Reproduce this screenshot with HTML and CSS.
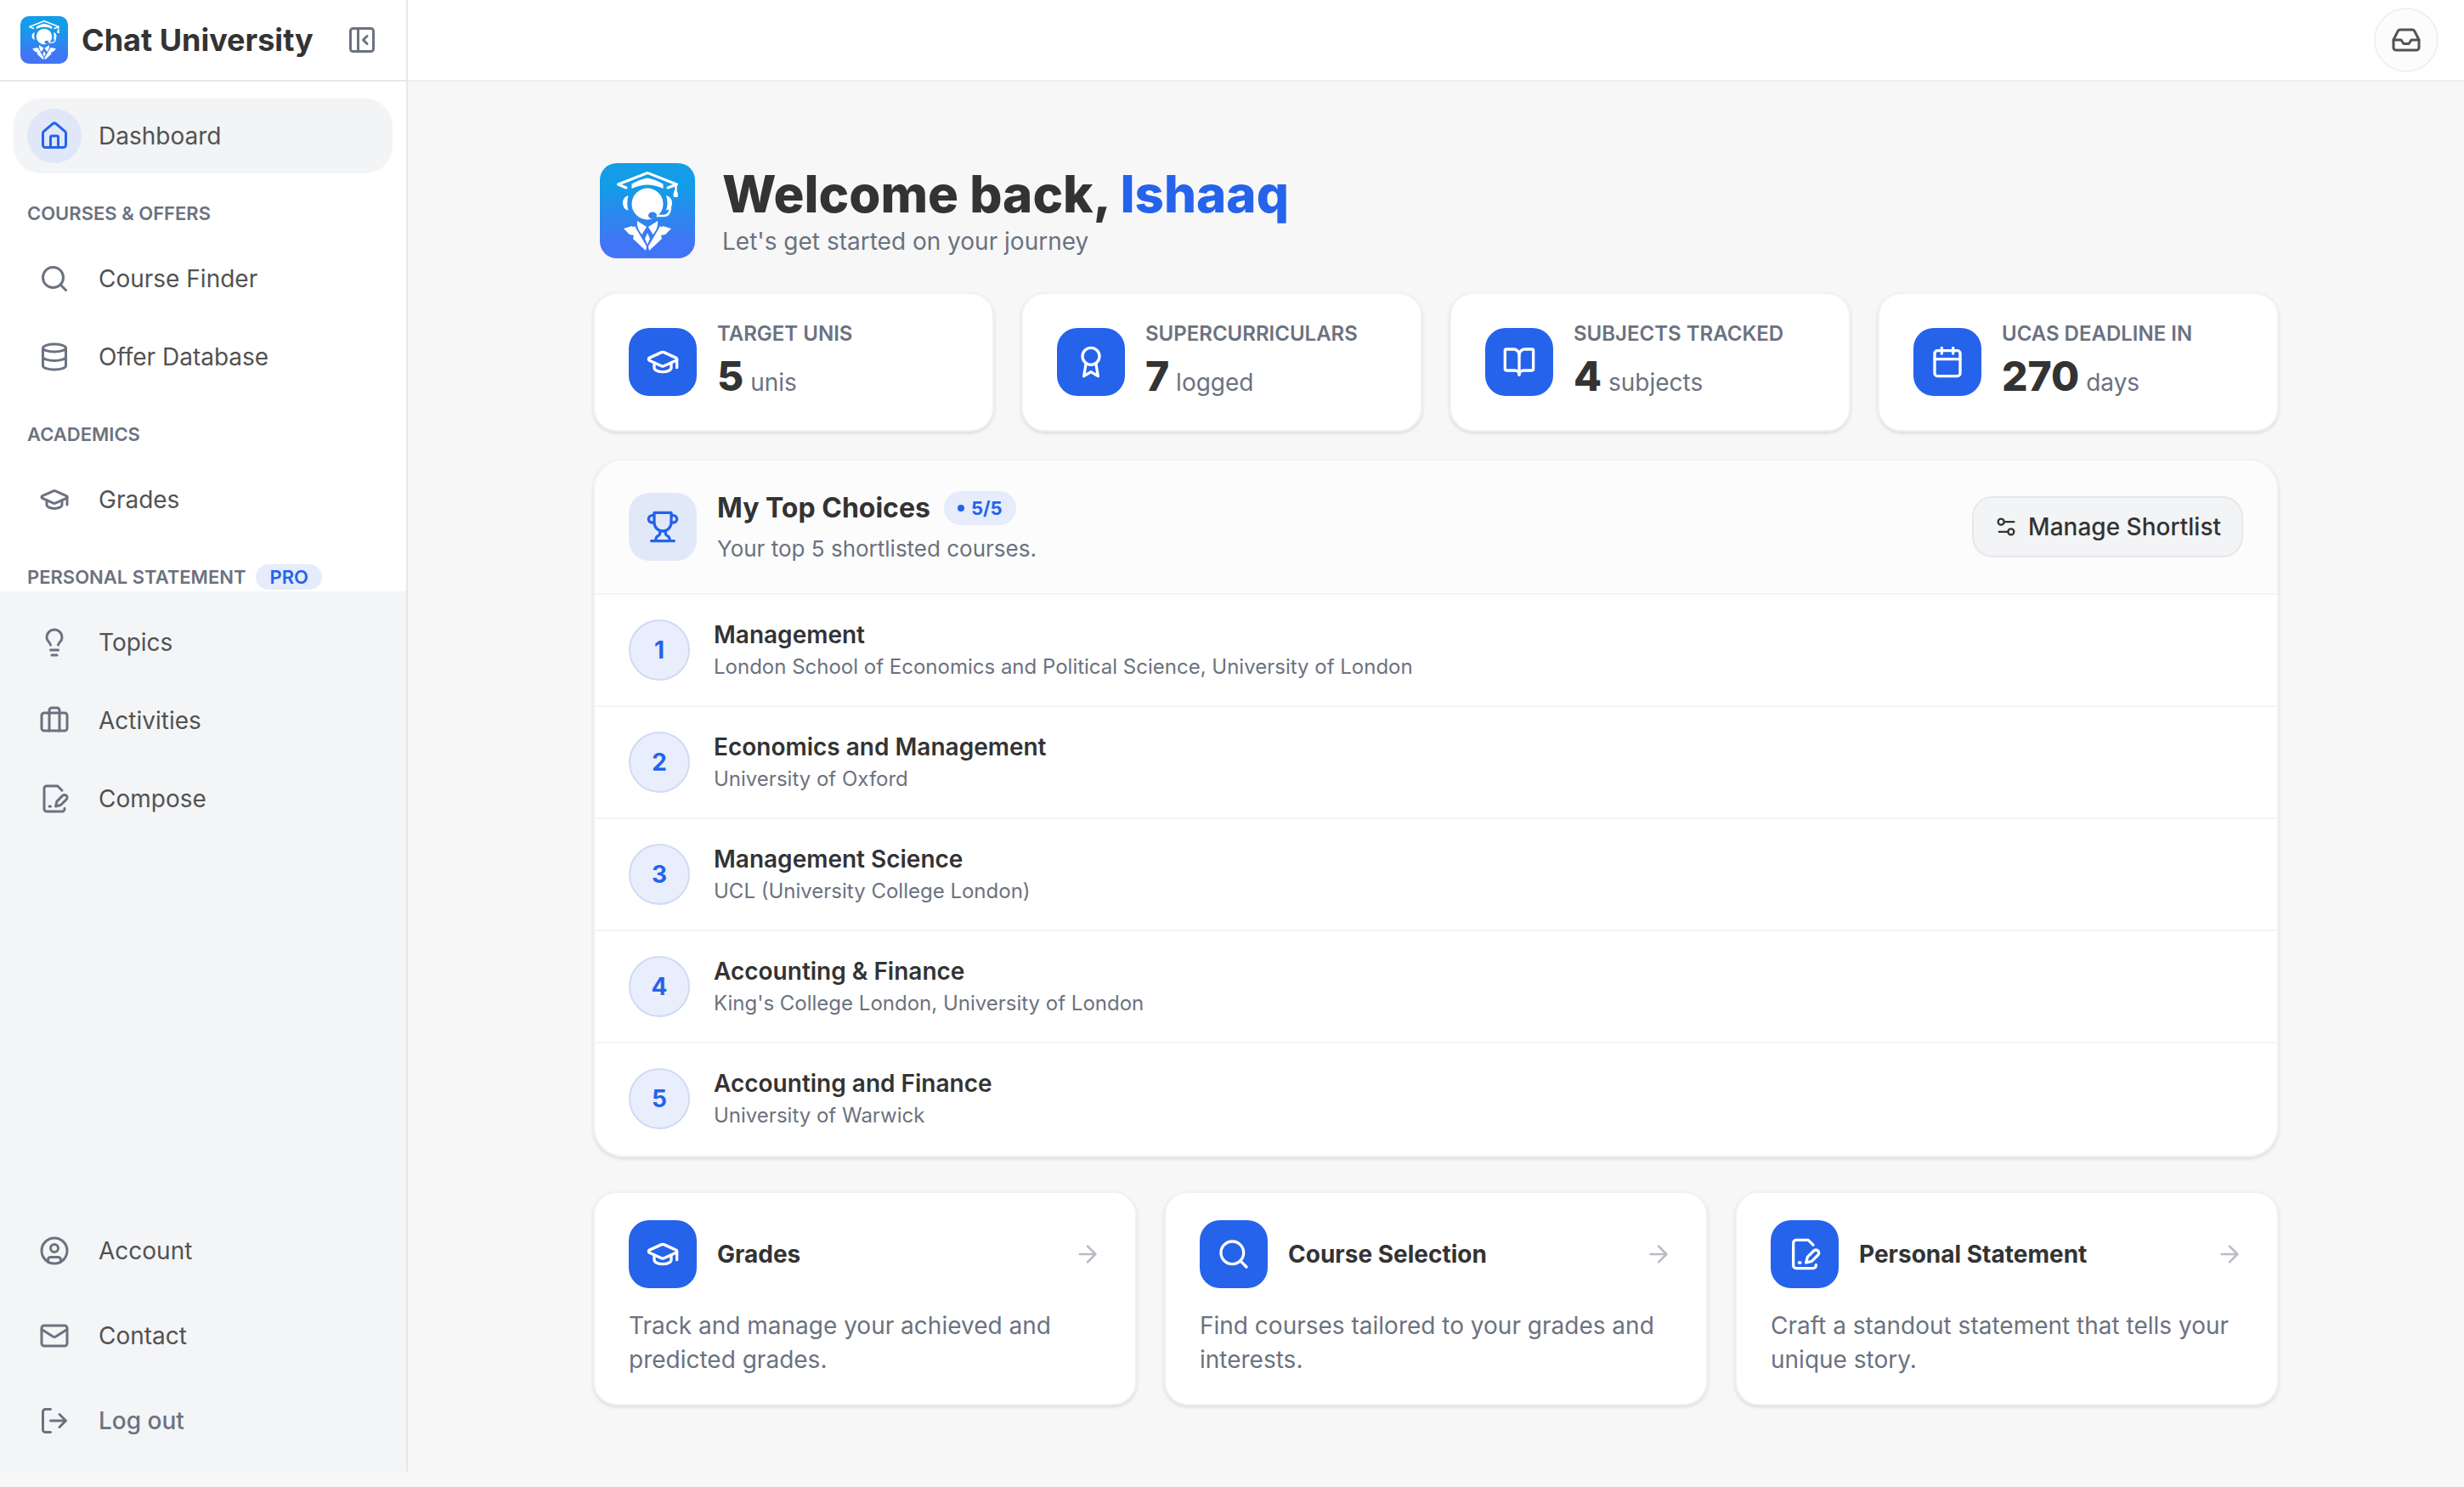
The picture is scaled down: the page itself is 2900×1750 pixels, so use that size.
FILE: index.html
```html
<!DOCTYPE html>
<html lang="en">
<head>
  <meta charset="UTF-8">
  <title>Dashboard - Chat University</title>
  <link rel="stylesheet" href="styles.css">
</head>
<body>
  <!-- Shared icons -->
  <svg class="sprite" aria-hidden="true">
    <defs>
      <linearGradient id="logo-bg" x1="0" y1="0" x2="0" y2="1">
        <stop offset="0.25" stop-color="#149ce8"/>
        <stop offset="0.85" stop-color="#4274f6"/>
      </linearGradient>
    </defs>
    <symbol id="logo" viewBox="0 0 112 112">
      <rect width="112" height="112" rx="20" fill="url(#logo-bg)"/>
      <path d="M31 29 21.500 25 56 11.500 90.500 25 80 29" fill="none" stroke="#fff" stroke-width="3" stroke-linejoin="round" stroke-linecap="round"/>
      <path d="M37.500 30V24.500Q47 19 56 17.500Q65 19 74.500 24.500V30Q56 21 37.500 30Z" fill="#fff"/>
      <path d="M89.500 25V33" stroke="#fff" stroke-width="2.500"/>
      <path d="M88.500 31Q93 34 91.500 40H87Q85.500 36 88.500 31Z" fill="#fff"/>
      <circle cx="56" cy="48" r="18.500" fill="#fff"/>
      <path d="M33.500 38Q27 40 27 47Q27 54 33.500 55.500Q31 47 33.500 38ZM78 38Q85 40 85 47Q85 54 78 55.500Q81 47 78 38Z" fill="#fff"/>
      <path d="M83 50Q83 62 75 62H66" fill="none" stroke="#fff" stroke-width="2.500" stroke-linecap="round"/>
      <ellipse cx="62" cy="61.500" rx="5" ry="4" fill="#2e84f0"/>
      <path d="M28 77 38 74 54 103 39 89 40 85 35 84ZM84 77 74 74 58 103 73 89 72 85 77 84Z" fill="#fff"/>
      <path d="M44 68 55 75 49.500 84Q43 77 44 68ZM68 68 57 75 62.500 84Q69 77 68 68Z" fill="#fff"/>
      <path d="M41 74 55 98 54 103 38 76ZM71 74 57 98 58 103 74 76Z" fill="#fff"/>
      <path d="M56 82 59 89 56 96 53 89Z" fill="#fff"/>
    </symbol>
    <symbol id="panel" viewBox="0 0 24 24"><rect width="18" height="18" x="3" y="3" rx="2"/><path d="M9 3v18M16 15l-3-3 3-3"/></symbol>
    <symbol id="home" viewBox="0 0 24 24"><path d="M15 21v-8a1 1 0 0 0-1-1h-4a1 1 0 0 0-1 1v8"/><path d="M3 10a2 2 0 0 1 .709-1.528l7-5.999a2 2 0 0 1 2.582 0l7 5.999A2 2 0 0 1 21 10v9a2 2 0 0 1-2 2H5a2 2 0 0 1-2-2z"/></symbol>
    <symbol id="search" viewBox="0 0 24 24"><circle cx="11" cy="11" r="8"/><path d="m21 21-4.300-4.300"/></symbol>
    <symbol id="database" viewBox="0 0 24 24"><ellipse cx="12" cy="5" rx="9" ry="3"/><path d="M3 5V19A9 3 0 0 0 21 19V5"/><path d="M3 12A9 3 0 0 0 21 12"/></symbol>
    <symbol id="cap" viewBox="0 0 24 24"><path d="M21.420 10.922a1 1 0 0 0-.019-1.838L12.830 5.180a2 2 0 0 0-1.660 0L2.600 9.080a1 1 0 0 0 0 1.832l8.570 3.908a2 2 0 0 0 1.660 0z"/><path d="M22 10v6"/><path d="M6 12.500V16a6 3 0 0 0 12 0v-3.500"/></symbol>
    <symbol id="bulb" viewBox="0 0 24 24"><path d="M15 14c.2-1 .7-1.700 1.500-2.500 1-.9 1.500-2.200 1.500-3.500A6 6 0 0 0 6 8c0 1 .2 2.200 1.500 3.500.7.7 1.300 1.500 1.500 2.500M9 18h6M10 22h4"/></symbol>
    <symbol id="briefcase" viewBox="0 0 24 24"><path d="M16 20V4a2 2 0 0 0-2-2h-4a2 2 0 0 0-2 2v16"/><rect width="20" height="14" x="2" y="6" rx="2"/></symbol>
    <symbol id="compose" viewBox="0 0 24 24"><path d="M20 19.500v.5a2 2 0 0 1-2 2H6a2 2 0 0 1-2-2V4a2 2 0 0 1 2-2h8.500L18 5.500"/><path d="M8 18h1"/><path d="M18.420 9.610a2.100 2.100 0 1 1 2.970 2.970L16.950 17 13 18l.99-3.950 4.430-4.440Z"/></symbol>
    <symbol id="user" viewBox="0 0 24 24"><circle cx="12" cy="12" r="10"/><circle cx="12" cy="10" r="3"/><path d="M7 20.662V19a2 2 0 0 1 2-2h6a2 2 0 0 1 2 2v1.662"/></symbol>
    <symbol id="mail" viewBox="0 0 24 24"><rect width="20" height="16" x="2" y="4" rx="2"/><path d="m22 7-8.970 5.700a1.940 1.940 0 0 1-2.060 0L2 7"/></symbol>
    <symbol id="logout" viewBox="0 0 24 24"><path d="M9 21H5a2 2 0 0 1-2-2V5a2 2 0 0 1 2-2h4M16 17l5-5-5-5M21 12H9"/></symbol>
    <symbol id="inbox" viewBox="0 0 24 24"><path d="M22 12h-6l-2 3h-4l-2-3H2"/><path d="M5.450 5.110 2 12v6a2 2 0 0 0 2 2h16a2 2 0 0 0 2-2v-6l-3.450-6.890A2 2 0 0 0 16.760 4H7.240a2 2 0 0 0-1.790 1.110z"/></symbol>
    <symbol id="award" viewBox="0 0 24 24"><circle cx="12" cy="8" r="6"/><path d="M15.477 12.890 17 22l-5-3-5 3 1.523-9.110"/></symbol>
    <symbol id="book" viewBox="0 0 24 24"><path d="M12 7v14"/><path d="M3 18a1 1 0 0 1-1-1V4a1 1 0 0 1 1-1h5a4 4 0 0 1 4 4 4 4 0 0 1 4-4h5a1 1 0 0 1 1 1v13a1 1 0 0 1-1 1h-6a3 3 0 0 0-3 3 3 3 0 0 0-3-3z"/></symbol>
    <symbol id="calendar" viewBox="0 0 24 24"><path d="M8 2v4M16 2v4M3 10h18"/><rect width="18" height="18" x="3" y="4" rx="2"/></symbol>
    <symbol id="trophy" viewBox="0 0 24 24"><path d="M6 9H4.500a2.500 2.500 0 0 1 0-5H6M18 9h1.500a2.500 2.500 0 0 0 0-5H18M4 22h16M10 14.660V17c0 .55-.47.98-.97 1.210C7.850 18.750 7 20.240 7 22M14 14.660V17c0 .55.47.98.97 1.210C16.150 18.750 17 20.240 17 22M18 2H6v7a6 6 0 0 0 12 0V2Z"/></symbol>
    <symbol id="sliders" viewBox="0 0 24 24"><path d="M20 7h-9M14 17H5"/><circle cx="17" cy="17" r="3"/><circle cx="7" cy="7" r="3"/></symbol>
    <symbol id="arrow" viewBox="0 0 24 24"><path d="M5 12h14M12 5l7 7-7 7"/></symbol>
  </svg>

  <div class="app">
    <aside class="sidebar">
      <div class="sidebar-header">
        <svg class="brand-logo"><use href="#logo"/></svg>
        <span class="brand-name">Chat University</span>
        <button class="collapse-btn" aria-label="Collapse sidebar"><svg class="icon"><use href="#panel"/></svg></button>
      </div>

      <nav class="nav-top">
        <a href="#" class="nav-item active"><span class="nav-icon"><svg class="icon"><use href="#home"/></svg></span>Dashboard</a>
        <h2 class="nav-label">COURSES &amp; OFFERS</h2>
        <a href="#" class="nav-item"><span class="nav-icon"><svg class="icon"><use href="#search"/></svg></span>Course Finder</a>
        <a href="#" class="nav-item"><span class="nav-icon"><svg class="icon"><use href="#database"/></svg></span>Offer Database</a>
        <h2 class="nav-label">ACADEMICS</h2>
        <a href="#" class="nav-item"><span class="nav-icon"><svg class="icon"><use href="#cap"/></svg></span>Grades</a>
        <h2 class="nav-label last">PERSONAL STATEMENT <span class="pro">PRO</span></h2>
      </nav>

      <div class="nav-bottom">
        <nav class="nav-group">
          <a href="#" class="nav-item"><span class="nav-icon"><svg class="icon"><use href="#bulb"/></svg></span>Topics</a>
          <a href="#" class="nav-item"><span class="nav-icon"><svg class="icon"><use href="#briefcase"/></svg></span>Activities</a>
          <a href="#" class="nav-item"><span class="nav-icon"><svg class="icon"><use href="#compose"/></svg></span>Compose</a>
        </nav>
        <nav class="nav-group account">
          <a href="#" class="nav-item"><span class="nav-icon"><svg class="icon"><use href="#user"/></svg></span>Account</a>
          <a href="#" class="nav-item"><span class="nav-icon"><svg class="icon"><use href="#mail"/></svg></span>Contact</a>
          <button class="nav-item logout"><span class="nav-icon"><svg class="icon"><use href="#logout"/></svg></span>Log out</button>
        </nav>
      </div>
    </aside>

    <div class="page">
      <header class="topbar">
        <button class="inbox-btn" aria-label="Inbox"><svg class="icon"><use href="#inbox"/></svg></button>
      </header>

      <main class="content">
        <div class="welcome">
          <svg class="welcome-logo"><use href="#logo"/></svg>
          <div>
            <h1>Welcome back, <span>Ishaaq</span></h1>
            <p>Let's get started on your journey</p>
          </div>
        </div>

        <section class="stats">
          <div class="card stat">
            <span class="tile"><svg><use href="#cap"/></svg></span>
            <div>
              <h3>TARGET UNIS</h3>
              <p><strong>5</strong> unis</p>
            </div>
          </div>
          <div class="card stat">
            <span class="tile"><svg><use href="#award"/></svg></span>
            <div>
              <h3>SUPERCURRICULARS</h3>
              <p><strong>7</strong> logged</p>
            </div>
          </div>
          <div class="card stat">
            <span class="tile"><svg><use href="#book"/></svg></span>
            <div>
              <h3>SUBJECTS TRACKED</h3>
              <p><strong>4</strong> subjects</p>
            </div>
          </div>
          <div class="card stat">
            <span class="tile"><svg><use href="#calendar"/></svg></span>
            <div>
              <h3>UCAS DEADLINE IN</h3>
              <p><strong>270</strong> days</p>
            </div>
          </div>
        </section>

        <section class="card choices">
          <div class="choices-header">
            <span class="tile light"><svg><use href="#trophy"/></svg></span>
            <div class="choices-title">
              <h2>My Top Choices <span class="count">5/5</span></h2>
              <p>Your top 5 shortlisted courses.</p>
            </div>
            <button class="manage-btn"><svg><use href="#sliders"/></svg>Manage Shortlist</button>
          </div>
          <ol class="choice-list">
            <li><span class="rank">1</span><div><h3>Management</h3><p>London School of Economics and Political Science, University of London</p></div></li>
            <li><span class="rank">2</span><div><h3>Economics and Management</h3><p>University of Oxford</p></div></li>
            <li><span class="rank">3</span><div><h3>Management Science</h3><p>UCL (University College London)</p></div></li>
            <li><span class="rank">4</span><div><h3>Accounting &amp; Finance</h3><p>King's College London, University of London</p></div></li>
            <li><span class="rank">5</span><div><h3>Accounting and Finance</h3><p>University of Warwick</p></div></li>
          </ol>
        </section>

        <section class="links">
          <a href="#" class="card link-card">
            <div class="link-head">
              <span class="tile"><svg><use href="#cap"/></svg></span>
              <h3>Grades</h3>
              <svg class="arrow"><use href="#arrow"/></svg>
            </div>
            <p>Track and manage your achieved and predicted grades.</p>
          </a>
          <a href="#" class="card link-card">
            <div class="link-head">
              <span class="tile"><svg><use href="#search"/></svg></span>
              <h3>Course Selection</h3>
              <svg class="arrow"><use href="#arrow"/></svg>
            </div>
            <p>Find courses tailored to your grades and interests.</p>
          </a>
          <a href="#" class="card link-card">
            <div class="link-head">
              <span class="tile"><svg><use href="#compose"/></svg></span>
              <h3>Personal Statement</h3>
              <svg class="arrow"><use href="#arrow"/></svg>
            </div>
            <p>Craft a standout statement that tells your unique story.</p>
          </a>
        </section>
      </main>
    </div>
  </div>
</body>
</html>
```

FILE: styles.css
```css
* {
  margin: 0;
  padding: 0;
  box-sizing: border-box;
}

body {
  font-family: Inter, sans-serif;
  font-size: 28px;
  line-height: 40px;
  color: #333;
  background: #f7f7f7;
}

a {
  color: inherit;
  text-decoration: none;
}

button {
  font: inherit;
  color: inherit;
  background: none;
  border: none;
  cursor: pointer;
}

svg {
  display: block;
  flex-shrink: 0;
  fill: none;
  stroke: currentColor;
  stroke-width: 2;
  stroke-linecap: round;
  stroke-linejoin: round;
}

#logo {
  stroke: none;
}

.sprite {
  position: absolute;
  width: 0;
  height: 0;
}

.icon {
  width: 36px;
  height: 36px;
}

.app {
  display: flex;
  min-height: 100vh;
}

/* Sidebar */
.sidebar {
  display: flex;
  flex-direction: column;
  width: 480px;
  flex-shrink: 0;
  margin-bottom: 18px;
  background: #fff;
  border-right: 2px solid #e5e7e9;
}

.sidebar-header {
  display: flex;
  align-items: center;
  gap: 16px;
  height: 96px;
  padding: 0 34px 0 24px;
  border-bottom: 2px solid #e8e8e8;
}

.brand-logo {
  width: 56px;
  height: 56px;
}

.brand-name {
  flex: 1;
  font-size: 36px;
  font-weight: 700;
  white-space: nowrap;
}

.collapse-btn {
  color: #6b7280;
}

.nav-top {
  padding: 20px 16px 0;
}

.nav-item {
  display: flex;
  align-items: center;
  gap: 20px;
  width: 100%;
  height: 88px;
  padding: 0 16px;
  margin-bottom: 4px;
  border-radius: 32px;
  color: #525252;
  text-align: left;
}

.nav-item.active {
  background: #f3f4f6;
}

.nav-icon {
  display: flex;
  align-items: center;
  justify-content: center;
  width: 64px;
  height: 64px;
  border-radius: 50%;
  color: #6b7280;
}

.active .nav-icon {
  background: #dfe7f8;
  color: #2563eb;
}

.nav-label {
  display: flex;
  align-items: center;
  gap: 12px;
  height: 30px;
  margin: 32px 16px 18px;
  font-size: 22px;
  font-weight: 600;
  color: #6b7280;
  white-space: nowrap;
}

.nav-label.last {
  margin-bottom: 2px;
}

.pro {
  padding: 0 16px;
  border-radius: 15px;
  background: #e6ecfb;
  color: #2563eb;
  font-weight: 600;
  line-height: 30px;
}

.nav-bottom {
  display: flex;
  flex-direction: column;
  justify-content: space-between;
  flex: 1;
  padding: 16px;
  background: #f4f5f7;
}

.account {
  display: flex;
  flex-direction: column;
  gap: 12px;
}

.account .nav-item {
  margin-bottom: 0;
}

.nav-item.logout {
  color: #6b7280;
  font-weight: 500;
}

/* Main area */
.page {
  flex: 1;
}

.topbar {
  display: flex;
  align-items: center;
  justify-content: flex-end;
  height: 96px;
  padding: 0 30px;
  background: #fff;
  border-bottom: 2px solid #efefef;
}

.inbox-btn {
  display: flex;
  align-items: center;
  justify-content: center;
  width: 76px;
  height: 76px;
  border: 2px solid #f0f0f0;
  border-radius: 50%;
  background: #fcfcfc;
  color: #525252;
}

.content {
  max-width: 2048px;
  margin: 0 auto;
  padding: 96px 32px 64px;
}

.welcome {
  display: flex;
  align-items: center;
  gap: 32px;
  padding-left: 8px;
  margin-bottom: 40px;
}

.welcome-logo {
  width: 112px;
  height: 112px;
}

.welcome h1 {
  font-size: 60px;
  font-weight: 800;
  line-height: 72px;
}

.welcome h1 span {
  color: #2563eb;
}

.welcome p {
  color: #6b7280;
}

.card {
  background: #fff;
  border: 2px solid #f1f3f3;
  border-radius: 28px;
  box-shadow: 0 2px 4px rgba(0, 0, 0, 0.12);
}

.tile {
  display: flex;
  align-items: center;
  justify-content: center;
  flex-shrink: 0;
  width: 80px;
  height: 80px;
  border-radius: 24px;
  background: #2563eb;
  color: #fff;
}

.tile svg {
  width: 40px;
  height: 40px;
}

.tile.light {
  background: #e1e9f9;
  color: #2563eb;
}

/* Stats */
.stats {
  display: grid;
  grid-template-columns: repeat(4, 1fr);
  gap: 32px;
  margin-bottom: 32px;
}

.stat {
  display: flex;
  align-items: center;
  gap: 24px;
  height: 164px;
  padding: 0 40px;
}

.stat h3 {
  font-size: 24px;
  font-weight: 600;
  line-height: 40px;
  color: #6b7280;
}

.stat p {
  line-height: 60px;
  color: #6b7280;
}

.stat strong {
  font-size: 48px;
  font-weight: 800;
  color: #333;
}

/* Top choices */
.choices {
  border-radius: 36px;
  overflow: hidden;
  margin-bottom: 40px;
}

.choices-header {
  display: flex;
  align-items: center;
  gap: 24px;
  padding: 34px 40px;
  background: #fcfcfc;
  border-bottom: 2px solid #f3f4f4;
}

.choices-title {
  flex: 1;
}

.choices h2 {
  display: flex;
  align-items: center;
  gap: 16px;
  margin-bottom: 8px;
  font-size: 32px;
  font-weight: 700;
  line-height: 44px;
}

.choices-title p {
  font-size: 26px;
  line-height: 36px;
  color: #6b7280;
}

.count {
  display: flex;
  align-items: center;
  gap: 8px;
  padding: 0 16px;
  border-radius: 20px;
  background: #e6ecfb;
  color: #2563eb;
  font-size: 22px;
  line-height: 40px;
}

.count::before {
  content: "";
  width: 8px;
  height: 8px;
  border-radius: 50%;
  background: #2563eb;
}

.manage-btn {
  display: flex;
  align-items: center;
  gap: 12px;
  height: 72px;
  padding: 0 24px;
  border: 2px solid #e5e7e9;
  border-radius: 24px;
  background: #f3f4f6;
  font-weight: 500;
}

.manage-btn svg {
  width: 28px;
  height: 28px;
}

.choice-list {
  list-style: none;
}

.choice-list li {
  display: flex;
  align-items: center;
  gap: 28px;
  padding: 27px 40px;
  border-bottom: 2px solid #f3f4f4;
}

.choice-list li:last-child {
  border-color: transparent;
}

.rank {
  width: 72px;
  height: 72px;
  border: 2px solid #d0dbf3;
  border-radius: 50%;
  background: #e8eefb;
  color: #2563eb;
  font-weight: 700;
  line-height: 68px;
  text-align: center;
}

.choice-list h3 {
  font-size: 28px;
  font-weight: 600;
  line-height: 40px;
}

.choice-list p {
  font-size: 24px;
  line-height: 36px;
  color: #6b7280;
}

/* Shortcut cards */
.links {
  display: grid;
  grid-template-columns: repeat(3, 1fr);
  gap: 32px;
}

.link-card {
  padding: 32px 40px;
}

.link-head {
  display: flex;
  align-items: center;
  gap: 24px;
  margin-bottom: 24px;
}

.link-head h3 {
  flex: 1;
  font-size: 28px;
  font-weight: 700;
}

.arrow {
  width: 32px;
  height: 32px;
  color: #b9bcc2;
}

.link-card p {
  color: #6b7280;
}
```
